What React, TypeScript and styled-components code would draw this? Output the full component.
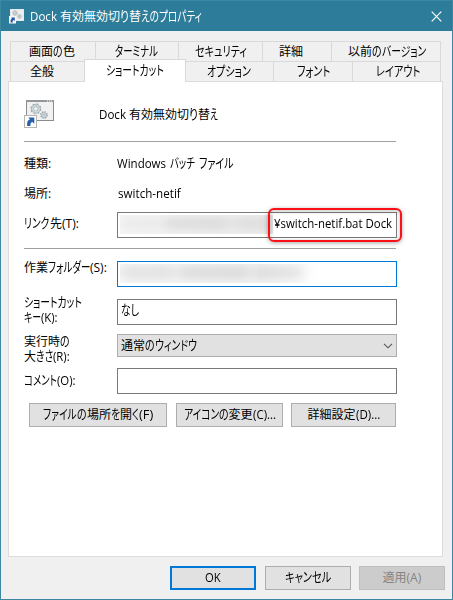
import React, { useLayoutEffect, useRef, useState } from "react";
import styled, { createGlobalStyle } from "styled-components";

const Global = createGlobalStyle`
  * { box-sizing: border-box; }
  body { margin: 0; background: #f0f0f0; }
`;

/* ---------- text ---------- */
const Line = styled.span<{ $color?: string }>`
  display: flex;
  height: 15px;
  line-height: 15px;
  font-family: "Open Sans", "Noto Sans CJK JP", sans-serif;
  font-size: 12px;
  color: ${(p) => p.$color ?? "#000"};
  white-space: pre;
`;
const RunBox = styled.span<{ $w: number; $gap: number }>`
  display: block;
  flex: none;
  width: ${(p) => p.$w}px;
  height: 15px;
  margin-left: ${(p) => p.$gap}px;
`;
const RunInk = styled.span`
  display: block;
  width: max-content;
  height: 15px;
  transform-origin: 0 55%;
  font-feature-settings: "palt";
`;

/** text, width in px, optional gap before it */
type Run = [string, number, number?];

const KANA = /^[\u3040-\u30ff]+$/;

function FitRun({ run }: { run: Run }) {
  const ref = useRef<HTMLSpanElement>(null);
  const [scale, setScale] = useState(1);
  useLayoutEffect(() => {
    if (ref.current) setScale(run[1] / ref.current.offsetWidth);
  }, [run]);
  const tall = KANA.test(run[0]) ? 1.1 : 1;
  return (
    <RunBox $w={run[1]} $gap={run[2] ?? 0}>
      <RunInk ref={ref} style={{ transform: `scale(${scale}, ${tall})` }}>{run[0]}</RunInk>
    </RunBox>
  );
}

function Text({ runs, color }: { runs: Run[]; color?: string }) {
  return (
    <Line $color={color}>
      {runs.map((r, i) => <FitRun key={i} run={r} />)}
    </Line>
  );
}

/* ---------- window ---------- */
const Window = styled.div`
  display: flex;
  flex-direction: column;
  width: 453px;
  height: 600px;
  border: 1px solid #3c88a3;
  background: #f0f0f0;
`;
const TitleBar = styled.header`
  display: flex;
  align-items: center;
  height: 30px;
  padding: 0 10px 0 8px;
  background: #2d7d9a;
  gap: 6px;
  svg { flex: none; }
`;
const CloseButton = styled.button`
  display: flex;
  margin-left: auto;
  padding: 0;
  border: 0;
  background: none;
`;

/* ---------- tabs ---------- */
const Tabs = styled.nav`
  padding: 10px 0 0 9px;
`;
const TabRow = styled.div`
  display: flex;
  height: 20px;
  border-left: 1px solid #d9d9d9;
`;
const Tab = styled.div<{ $w: number; $pad: number }>`
  width: ${(p) => p.$w}px;
  padding: 2px 0 0 ${(p) => p.$pad}px;
  border: solid #d9d9d9;
  border-width: 1px 1px 0 0;
`;
const ActiveTab = styled(Tab)`
  position: relative;
  height: 23px;
  margin: -2px 0 0 -1px;
  padding-top: 3px;
  border-left-width: 1px;
  background: #fff;
`;

/* ---------- page ---------- */
const Panel = styled.main`
  display: flex;
  flex-direction: column;
  width: 435px;
  height: 476px;
  margin-left: 7px;
  padding-left: 15px;
  border: 1px solid #dcdcdc;
  background: #fff;
`;
const Header = styled.div`
  display: flex;
  height: 59px;
  padding-top: 18px;
  gap: 44px;
`;
const HeaderText = styled.div`
  padding-top: 7px;
`;
const Rule = styled.div<{ $mt?: number }>`
  flex: none;
  width: 372px;
  height: 1px;
  margin-top: ${(p) => p.$mt ?? 0}px;
  background: #a0a0a0;
`;
const Row = styled.div<{ $h: number; $mt?: number }>`
  display: grid;
  flex: none;
  grid-template-columns: 93px 280px;
  height: ${(p) => p.$h}px;
  margin-top: ${(p) => p.$mt ?? 0}px;
`;
const Cell = styled.div<{ $top: number }>`
  margin-top: ${(p) => p.$top}px;
`;
const Field = styled.div<{ $focus?: boolean }>`
  position: relative;
  height: 26px;
  padding: 3px 2px;
  border: 1px solid ${(p) => (p.$focus ? "#0078d7" : "#7a7a7a")};
  background: #fff;
`;
const Redacted = styled.div<{ $w: number; $base: string }>`
  display: flex;
  align-items: center;
  flex: none;
  gap: 4px;
  width: ${(p) => p.$w}px;
  height: 19px;
  margin-top: -1px;
  padding-bottom: 3px;
  overflow: hidden;
  background: ${(p) => p.$base};
`;
const Smudge = styled.span<{ $w: number; $a: number }>`
  flex: none;
  width: ${(p) => p.$w}px;
  height: 9px;
  background: rgba(0, 0, 0, ${(p) => p.$a});
  filter: blur(6px);
`;
const FieldRow = styled.div`
  display: flex;
`;
const Highlight = styled.div`
  position: absolute;
  left: 150px;
  top: -5px;
  width: 134px;
  height: 34px;
  border: 2px solid #fa1016;
  border-radius: 6px;
  box-shadow: 0 1px 4px rgba(0,0,0,.35), inset 0 1px 4px rgba(0,0,0,.25);
`;
const Select = styled.div`
  display: flex;
  align-items: center;
  justify-content: space-between;
  height: 23px;
  padding: 0 3px;
  border: 1px solid #adadad;
  background: #e1e1e1;
`;
const Actions = styled.div`
  display: flex;
  margin: 9px 0 0 5px;
`;
const Button = styled.button<{ $w: number; $gap?: number; $kind?: "default" | "disabled" }>`
  display: flex;
  align-items: center;
  justify-content: center;
  width: ${(p) => p.$w}px;
  height: 24px;
  margin-left: ${(p) => p.$gap ?? 0}px;
  padding: 0 0 1px;
  border: ${(p) => (p.$kind === "default" ? "2px solid #0078d7" : p.$kind === "disabled" ? "1px solid #bfbfbf" : "1px solid #adadad")};
  background: ${(p) => (p.$kind === "disabled" ? "#ccc" : "#e1e1e1")};
`;
const Footer = styled.footer`
  display: flex;
  justify-content: flex-end;
  padding: 9px 7px 0 0;
`;

/* ---------- drawings ---------- */
function Gear({ x, y, r, w }: { x: number; y: number; r: number; w: number }) {
  return (
    <g fill="none" transform={`translate(${x} ${y})`}>
      <circle r={r + 0.7} stroke="#a3adb3" strokeWidth="1.6" strokeDasharray={`${(r + 0.7) * 0.42} ${(r + 0.7) * 0.3654}`} />
      <circle r={r - 0.7} stroke="#98a5ac" strokeWidth={w + 0.8} />
      <circle r={r - 0.7} stroke="#cbd5da" strokeWidth={w} />
    </g>
  );
}
const BatchIcon = () => (
  <svg width="31" height="29" viewBox="0 0 31 29">
    <rect x="2.5" y="0.5" width="27" height="20" fill="#f1f1f1" stroke="#888c8e" />
    <path d="M2 1h28" stroke="#929899" strokeWidth="2" />
    <path d="M23 1h1m1 0h1m1 0h1" stroke="#fff" />
    <Gear x={11.8} y={8.8} r={4} w={2} />
    <Gear x={20} y={15} r={2.5} w={1.3} />
    <rect x="0.5" y="15.5" width="12" height="12" fill="#fff" stroke="#b5b5b5" />
    <path d="M3.2 26C2.8 21.5 4.1 19.8 6 19.5L4.3 17.5H10.3V23.8L8.3 21.9C6.6 22.4 6.3 23.8 6.4 26Z" fill="#2861a8" />
  </svg>
);
const SmallBatchIcon = () => (
  <svg width="16" height="16" viewBox="0 0 16 16">
    <rect x="1.5" y="1.5" width="13" height="11" fill="#eee" stroke="#e5e9ea" />
    <circle cx="6" cy="5" r="2.2" fill="#c7cdcf" stroke="#b8bfc2" />
    <circle cx="10.5" cy="8.4" r="1.8" fill="#c3cacd" stroke="#b8bfc2" />
    <rect x="0" y="8" width="7" height="7.5" fill="#f4f7fa" />
    <path d="M1.6 14.5C1.4 12 2 11 3 10.8L2 9.4H5.8V13L4.7 12C3.7 12.4 3.5 13.2 3.6 14.5Z" fill="#2459a5" />
  </svg>
);
const CloseIcon = () => (
  <svg width="11" height="11" viewBox="0 0 11 11">
    <path d="M.7.7l9.6 9.6M10.3.7L.7 10.3" stroke="#fff" strokeWidth="1.2" />
  </svg>
);
const Chevron = () => (
  <svg width="10" height="6" viewBox="0 0 10 6">
    <path d="M1 .8l4 4 4-4" fill="none" stroke="#555" strokeWidth="1.1" />
  </svg>
);

export default function App() {
  return (
    <>
      <Global />
      <Window>
        <TitleBar>
          <SmallBatchIcon />
          <Text color="#fff" runs={[["Dock", 27, -1], ["有効無効切", 60, 3], ["り", 9], ["替", 12], ["えのプロパティ", 61]]} />
          <CloseButton aria-label="閉じる"><CloseIcon /></CloseButton>
        </TitleBar>

        <Tabs>
          <TabRow>
            <Tab $w={85} $pad={18}><Text runs={[["画面", 24], ["の", 10], ["色", 12]]} /></Tab>
            <Tab $w={83} $pad={19}><Text runs={[["ターミナル", 43]]} /></Tab>
            <Tab $w={84} $pad={16}><Text runs={[["セキュリティ", 52]]} /></Tab>
            <Tab $w={69} $pad={16}><Text runs={[["詳細", 24]]} /></Tab>
            <Tab $w={109} $pad={16}><Text runs={[["以前", 24], ["の", 10], ["バージョン", 44]]} /></Tab>
          </TabRow>
          <TabRow>
            <Tab $w={74} $pad={19}><Text runs={[["全般", 24]]} /></Tab>
            <ActiveTab $w={102} $pad={21}><Text runs={[["ショートカット", 58]]} /></ActiveTab>
            <Tab $w={88} $pad={21}><Text runs={[["オプション", 44]]} /></Tab>
            <Tab $w={79} $pad={23}><Text runs={[["フォント", 33]]} /></Tab>
            <Tab $w={88} $pad={23}><Text runs={[["レイアウト", 44]]} /></Tab>
          </TabRow>
        </Tabs>

        <Panel>
          <Header>
            <BatchIcon />
            <HeaderText><Text runs={[["Dock", 27], ["有効無効切", 60, 3], ["り", 9], ["替", 12], ["え", 8]]} /></HeaderText>
          </Header>
          <Rule />
          <Row $h={43}>
            <Cell $top={14}><Text runs={[["種類", 24], [":", 3]]} /></Cell>
            <Cell $top={14}><Text runs={[["Windows", 49], ["バッチ", 25, 4], ["ファイル", 35, 4]]} /></Cell>
          </Row>
          <Row $h={18}>
            <Cell $top={1}><Text runs={[["場所", 24], [":", 3]]} /></Cell>
            <Cell $top={1}><Text runs={[["switch-netif", 63, 1]]} /></Cell>
          </Row>
          <Row $h={26} $mt={9}>
            <Cell $top={4}><Text runs={[["リンク", 25], ["先", 12, 1], ["(T):", 17]]} /></Cell>
            <Field>
              <FieldRow>
                <Redacted $w={153} $base="linear-gradient(90deg, #f6f6f6, #efefef 90%, #e6e6e6)">
                  <Smudge $w={40} $a={0.06} />
                  <Smudge $w={64} $a={0.13} />
                  <Smudge $w={40} $a={0.1} />
                </Redacted>
                <Text runs={[["¥switch-netif.bat Dock", 118, 1]]} />
              </FieldRow>
              <Highlight />
            </Field>
          </Row>
          <Rule $mt={10} />
          <Row $h={26} $mt={12}>
            <Cell $top={-1}><Text runs={[["作業", 24], ["フォルダー", 42], ["(S):", 17]]} /></Cell>
            <Field $focus>
              <Redacted $w={200} $base="linear-gradient(90deg, #f8f8f8, #f3f3f3 70%, #fff)">
                <Smudge $w={55} $a={0.12} />
                <Smudge $w={70} $a={0.15} />
                <Smudge $w={50} $a={0.13} />
              </Redacted>
            </Field>
          </Row>
          <Row $h={26} $mt={12}>
            <Cell $top={-4}>
              <Text runs={[["ショートカット", 58]]} />
              <Text runs={[["キー", 17], ["(K):", 17]]} />
            </Cell>
            <Field><Text runs={[["なし", 18, 1]]} /></Field>
          </Row>
          <Row $h={23} $mt={9}>
            <Cell $top={0}>
              <Text runs={[["実行時", 36], ["の", 10]]} />
              <Text runs={[["大", 12], ["きさ", 17], ["(R):", 17]]} />
            </Cell>
            <Select>
              <Text runs={[["通常", 24], ["の", 10], ["ウィンドウ", 42]]} />
              <Chevron />
            </Select>
          </Row>
          <Row $h={26} $mt={11}>
            <Cell $top={5}><Text runs={[["コメント", 33], ["(O):", 19]]} /></Cell>
            <Field />
          </Row>
          <Actions>
            <Button $w={138}><Text runs={[["ファイル", 34], ["の", 10], ["場所", 24], ["を", 9], ["開", 12], ["く", 7], ["(F)", 14]]} /></Button>
            <Button $w={107} $gap={9}><Text runs={[["アイコン", 35], ["の", 10], ["変更", 24], ["(C)...", 23]]} /></Button>
            <Button $w={105} $gap={8}><Text runs={[["詳細設定", 48], ["(D)...", 24]]} /></Button>
          </Actions>
        </Panel>

        <Footer>
          <Button $w={86} $kind="default"><Text runs={[["OK", 16]]} /></Button>
          <Button $w={86} $gap={9}><Text runs={[["キャンセル", 46]]} /></Button>
          <Button $w={86} $gap={8} $kind="disabled"><Text color="#838383" runs={[["適用", 24], ["(A)", 15]]} /></Button>
        </Footer>
      </Window>
    </>
  );
}
